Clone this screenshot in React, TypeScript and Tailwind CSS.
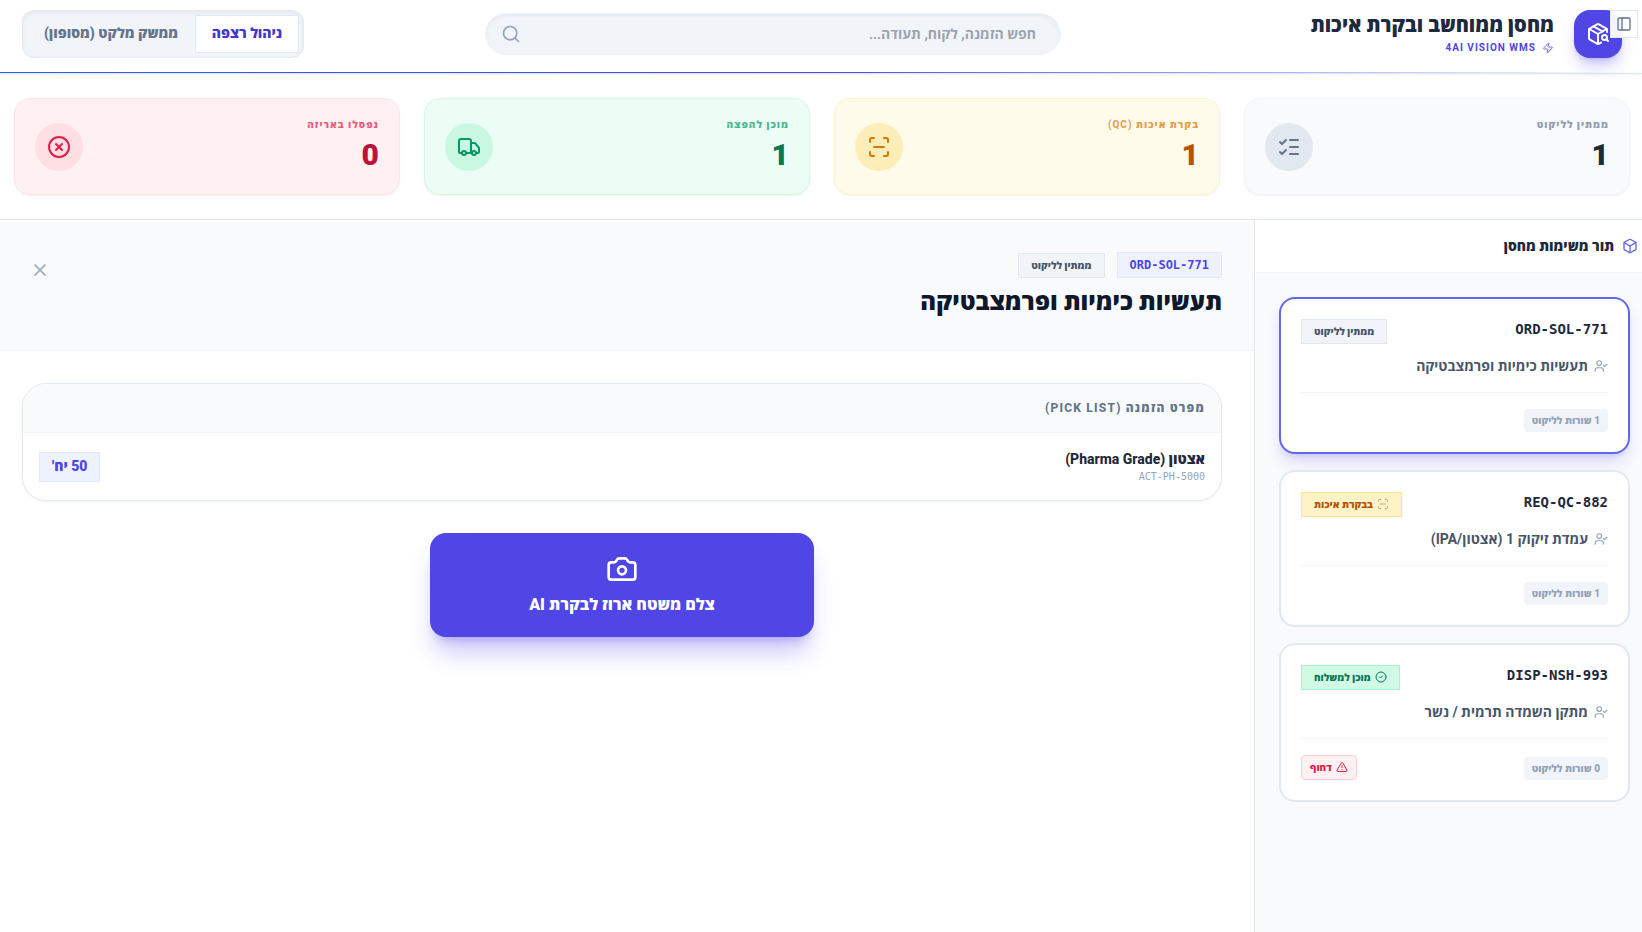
import React, { useState } from 'react';
import {
  AlertTriangle,
  Box,
  Camera,
  CircleCheck,
  CircleX,
  ListChecks,
  PackageSearch,
  PanelLeft,
  ScanLine,
  Search,
  Truck,
  UserCheck,
  X,
  Zap,
} from 'lucide-react';

type Status = 'pending' | 'qc' | 'ready';

interface OrderItem {
  name: string;
  sku: string;
  qty: number;
}

interface Task {
  id: string;
  customer: string;
  status: Status;
  urgent?: boolean;
  items: OrderItem[];
}

const TASKS: Task[] = [
  {
    id: 'ORD-SOL-771',
    customer: 'תעשיות כימיות ופרמצבטיקה',
    status: 'pending',
    items: [{ name: 'אצטון (Pharma Grade)', sku: 'ACT-PH-5000', qty: 50 }],
  },
  {
    id: 'REQ-QC-882',
    customer: 'עמדת זיקוק 1 (אצטון/IPA)',
    status: 'qc',
    items: [{ name: 'אצטון', sku: 'ACT-IPA', qty: 1 }],
  },
  {
    id: 'DISP-NSH-993',
    customer: 'מתקן השמדה תרמית / נשר',
    status: 'ready',
    urgent: true,
    items: [],
  },
];

const STATS = [
  {
    label: 'ממתין לליקוט',
    value: 1,
    icon: ListChecks,
    card: 'bg-[#f8fafc] border-[#f1f5f9]',
    text: 'text-[#64748b]',
    number: 'text-[#1e293b]',
    circle: 'bg-[#e2e8f0] text-[#64748b]',
  },
  {
    label: 'בקרת איכות (QC)',
    value: 1,
    icon: ScanLine,
    card: 'bg-[#fffbeb] border-[#fef3c7]',
    text: 'text-[#d97706]',
    number: 'text-[#b45309]',
    circle: 'bg-[#fdeeb9] text-[#d97706]',
  },
  {
    label: 'מוכן להפצה',
    value: 1,
    icon: Truck,
    card: 'bg-[#ecfdf5] border-[#d1fae5]',
    text: 'text-[#059669]',
    number: 'text-[#047857]',
    circle: 'bg-[#caf7e1] text-[#059669]',
  },
  {
    label: 'נפסלו באריזה',
    value: 0,
    icon: CircleX,
    card: 'bg-[#fff1f2] border-[#ffe4e6]',
    text: 'text-[#e11d48]',
    number: 'text-[#be123c]',
    circle: 'bg-[#ffdfe3] text-[#e11d48]',
  },
];

const StatusBadge = ({ status }: { status: Status }) => {
  const base = 'inline-flex h-[25px] items-center gap-1 border px-3 pb-px text-[10px] font-extrabold whitespace-nowrap';
  if (status === 'qc') {
    return (
      <span className={`${base} bg-[#fef3c7] border-[#fde68a] text-[#b45309]`}>
        <ScanLine size={12} strokeWidth={2} className="opacity-50" />
        בבקרת איכות
      </span>
    );
  }
  if (status === 'ready') {
    return (
      <span className={`${base} bg-[#d1fae5] border-[#a7f3d0] text-[#047857]`}>
        <CircleCheck size={12} strokeWidth={2} />
        מוכן למשלוח
      </span>
    );
  }
  return <span className={`${base} bg-[#f1f5f9] border-[#e2e8f0] text-[#475569]`}>ממתין לליקוט</span>;
};

const TaskCard = ({ task, selected, onSelect }: { task: Task; selected: boolean; onSelect: () => void }) => (
  <button
    type="button"
    onClick={onSelect}
    className={`block w-full rounded-2xl border-2 bg-white p-5 text-right ${
      selected ? 'border-[#6366f1] shadow-lg shadow-[#4f46e5]/20' : 'border-[#e2e8f0]'
    }`}
  >
    <div className="flex items-start justify-between">
      <span className="font-['DejaVu_Sans_Mono',monospace] text-sm leading-5 font-bold text-[#1e293b]">{task.id}</span>
      <StatusBadge status={task.status} />
    </div>
    <div className="mt-3 flex items-center gap-1.5 text-sm leading-5 font-bold text-[#475569]">
      <UserCheck size={14} strokeWidth={2} className="text-[#94a3b8]" />
      {task.customer}
    </div>
    <div className="mt-4 flex items-end justify-between border-t border-[#f1f5f9] pt-4">
      <span className="flex h-[23px] items-center rounded bg-[#f1f5f9] px-2 pb-px text-[10px] font-black text-[#94a3b8]">
        {task.items.length} שורות לליקוט
      </span>
      {task.urgent && (
        <span className="flex h-[25px] items-center gap-1 rounded border border-[#fecdd3] bg-[#fff1f2] px-2 pb-px text-[10px] font-extrabold text-[#e11d48]">
          <AlertTriangle size={12} strokeWidth={2} />
          דחוף
        </span>
      )}
    </div>
  </button>
);

const App = () => {
  const [selectedId, setSelectedId] = useState<string | null>('ORD-SOL-771');
  const selected = TASKS.find((t) => t.id === selectedId);

  return (
    <div dir="rtl" className="flex min-h-screen flex-col bg-white font-['Roboto','Open_Sans',sans-serif] text-[#1e293b]">
      <button
        type="button"
        aria-label="סרגל צד"
        className="absolute top-2.5 right-1 z-20 flex size-7 items-center justify-center border border-[#e2e8f0] bg-white/95 text-[#64748b]"
      >
        <PanelLeft size={16} />
      </button>

      <header className="relative flex items-center justify-between border-b border-[#e2e8f0] pt-2.5 pr-5 pb-[15px] pl-[22px] shadow-xs">
        <div className="flex w-[380px] items-center gap-5">
          <div className="flex size-12 shrink-0 items-center justify-center rounded-2xl bg-[#4f46e5] text-white shadow-lg shadow-[#4f46e5]/30">
            <PackageSearch size={24} />
          </div>
          <div className="pt-0.5">
            <h1 className="text-xl leading-[26px] font-extrabold whitespace-nowrap">מחסן ממוחשב ובקרת איכות</h1>
            <p className="flex items-center gap-1.5 text-[10px] leading-5 font-bold tracking-widest text-[#4f46e5]">
              <Zap size={12} strokeWidth={2} className="opacity-80" />
              4AI VISION WMS
            </p>
          </div>
        </div>

        <div className="relative w-full max-w-xl">
          <input
            type="text"
            aria-label="חיפוש"
            placeholder="חפש הזמנה, לקוח, תעודה..."
            className="h-[42px] w-full rounded-full border border-[#f1f5f9] bg-[#f1f5f9] pr-6 pb-px pl-12 text-sm font-bold shadow-inner outline-none placeholder:text-[#9ca3af]"
          />
          <Search size={20} className="absolute top-1/2 left-4 -translate-y-1/2 text-[#94a3b8]" />
        </div>

        <div className="flex h-12 rounded-xl border border-[#e2e8f0] bg-[#f1f5f9] p-1 shadow-inner">
          <button type="button" className="w-[104px] border border-[#e2e8f0] bg-white pb-0.5 text-sm font-extrabold text-[#4338ca]">
            ניהול רצפה
          </button>
          <button type="button" className="w-[168px] pb-0.5 text-sm font-black text-[#64748b]">
            ממשק מלקט (מסופון)
          </button>
        </div>
        <div className="absolute inset-x-0 bottom-0 h-px bg-linear-to-l/srgb from-transparent via-[#4f46e5] to-[#2563eb]" />
      </header>

      <section className="grid grid-cols-4 gap-6 border-b border-[#e2e8f0] py-6 pr-3 pl-3.5">
        {STATS.map(({ label, value, icon: Icon, card, text, number, circle }) => (
          <div key={label} className={`flex h-[97px] items-center justify-between rounded-2xl border px-5 shadow-xs ${card}`}>
            <div className="pb-1">
              <p className={`text-[10px] leading-4 font-extrabold tracking-widest opacity-70 ${text}`}>{label}</p>
              <p className={`mt-1 text-3xl leading-9 font-black ${number}`}>{value}</p>
            </div>
            <div className={`flex size-12 items-center justify-center rounded-full ${circle}`}>
              <Icon className="size-6" />
            </div>
          </div>
        ))}
      </section>

      <main className="flex flex-1">
        <aside className="w-[388px] shrink-0 border-l border-[#e2e8f0] bg-[#f8fafc]">
          <div className="flex h-[53px] items-center gap-2 border-b border-[#f1f5f9] bg-white pr-1">
            <Box size={16} className="text-[#6366f1]" />
            <h2 className="pb-px text-sm font-extrabold">תור משימות מחסן</h2>
          </div>
          <div className="flex flex-col gap-4 py-6 pr-3 pl-6">
            {TASKS.map((task) => (
              <TaskCard
                key={task.id}
                task={task}
                selected={task.id === selectedId}
                onSelect={() => setSelectedId(task.id)}
              />
            ))}
          </div>
        </aside>

        {selected && (
          <section className="min-w-0 flex-1">
            <div className="flex items-start justify-between border-b border-[#f1f5f9] bg-[#f8fafc] pt-8 pr-8 pb-8 pl-[22px]">
              <div>
                <div className="flex items-end gap-3">
                  <span className="flex h-[26px] items-center border border-[#e0e7ff] bg-[#eef2ff] px-3 font-['DejaVu_Sans_Mono',monospace] text-xs font-bold text-[#4f46e5]">
                    {selected.id}
                  </span>
                  <StatusBadge status={selected.status} />
                </div>
                <h2 className="mt-2 text-2xl leading-8 font-black text-[#0f172a]">{selected.customer}</h2>
              </div>
              <button type="button" aria-label="סגור" onClick={() => setSelectedId(null)} className="p-2 text-[#94a3b8]">
                <X size={20} />
              </button>
            </div>

            <div className="pt-8 pr-8 pl-[22px]">
              <div className="overflow-hidden rounded-3xl border border-[#e2e8f0] shadow-xs">
                <h3 className="flex h-[49px] items-center border-b border-[#f1f5f9] bg-[#f8fafc] px-4 text-xs font-extrabold tracking-widest text-[#64748b]">
                  מפרט הזמנה (PICK LIST)
                </h3>
                <ul>
                  {selected.items.map((item) => (
                    <li key={item.sku} className="flex items-center justify-between p-4">
                      <div>
                        <p className="text-sm leading-5 font-extrabold">{item.name}</p>
                        <p className="font-['DejaVu_Sans_Mono',monospace] text-[10px] leading-[15px] text-[#94a3b8]">{item.sku}</p>
                      </div>
                      <span className="flex h-[30px] items-center border border-[#e0e7ff] bg-[#eef2ff] px-3 pb-px text-sm font-black text-[#4f46e5]">
                        {item.qty} יח'
                      </span>
                    </li>
                  ))}
                </ul>
              </div>

              <button
                type="button"
                className="mx-auto mt-8 flex w-full max-w-sm flex-col items-center gap-2 rounded-2xl bg-[#4f46e5] py-5 text-base leading-6 font-black text-white shadow-xl shadow-[#4f46e5]/30"
              >
                <Camera size={32} />
                צלם משטח ארוז לבקרת AI
              </button>
            </div>
          </section>
        )}
      </main>
    </div>
  );
};

export default App;
